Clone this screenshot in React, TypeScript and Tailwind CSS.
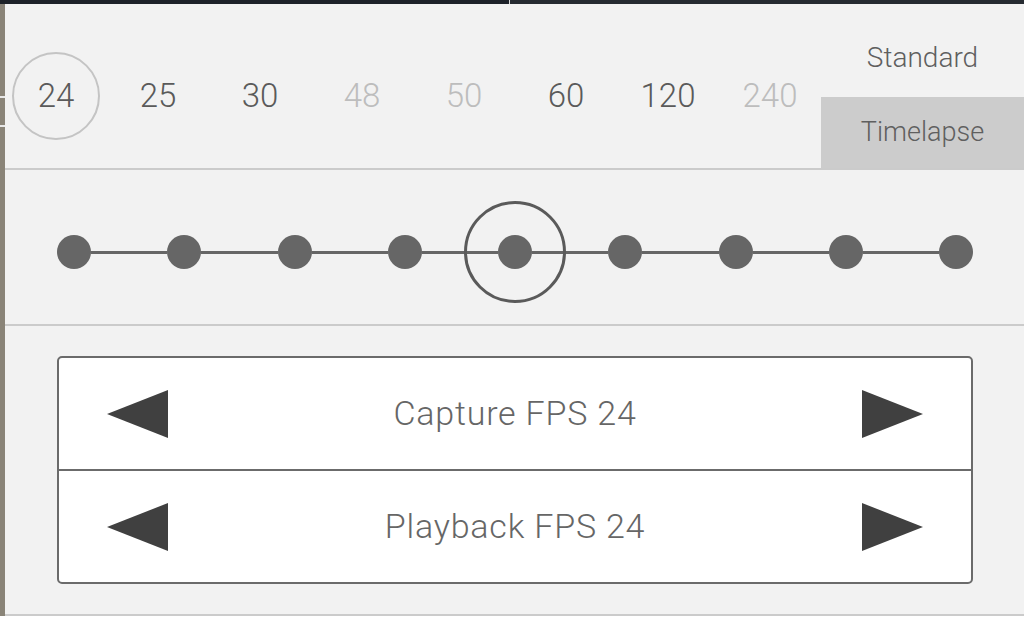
import React from "react";

const nums: { v: string; dim: boolean }[] = [
  { v: "24", dim: false },
  { v: "25", dim: false },
  { v: "30", dim: false },
  { v: "48", dim: true },
  { v: "50", dim: true },
  { v: "60", dim: false },
  { v: "120", dim: false },
  { v: "240", dim: true },
];

function LeftTri() {
  return (
    <svg width="61" height="48" viewBox="0 0 61 48" className="shrink-0">
      <polygon points="0,24 61,0 61,48" fill="#404040" />
    </svg>
  );
}
function RightTri() {
  return (
    <svg width="61" height="48" viewBox="0 0 61 48" className="shrink-0">
      <polygon points="61,24 0,0 0,48" fill="#404040" />
    </svg>
  );
}

export default function App() {
  const font = { fontFamily: "Roboto, 'Liberation Sans', sans-serif" };
  return (
    <div className="w-[1024px] h-[632px] overflow-hidden flex flex-col bg-white" style={font}>
      <div className="h-[4px] flex shrink-0">
        <div className="w-[509px] bg-[#1d2229]" />
        <div className="w-[1px] bg-[#d8d8d8]" />
        <div className="flex-1 bg-[#262b31]" />
      </div>
      <div className="flex h-[612px] shrink-0">
        <div className="w-[5px] flex flex-col bg-[#8a8478]">
          <div className="h-[92px]" />
          <div className="h-[2px] bg-[#e8e8e8]" />
          <div className="h-[27px]" />
          <div className="h-[2px] bg-[#e8e8e8]" />
        </div>
        <div className="flex-1 bg-[#f2f2f2] flex flex-col">
          {/* top section */}
          <div className="h-[166px] flex border-b-2 border-[#cbcbcb]">
            <div className="flex items-center pt-[20px]">
              {nums.map((n, i) => (
                <div key={n.v} className="w-[102px] flex items-center justify-center">
                  {i === 0 ? (
                    <div className="w-[88px] h-[88px] rounded-full border-2 border-[#c4c4c4] flex items-center justify-center text-[33px] font-light text-[#5a5a5a]">
                      {n.v}
                    </div>
                  ) : (
                    <span className={`text-[33px] font-light ${n.dim ? "text-[#bdbdbd]" : "text-[#5a5a5a]"}`}>{n.v}</span>
                  )}
                </div>
              ))}
            </div>
            <div className="flex-1 flex flex-col">
              <div className="h-[93px] flex items-center justify-center pt-[14px] text-[28px] font-light text-[#5f5f5f]">
                Standard
              </div>
              <div className="flex-1 bg-[#cccccc] flex items-center justify-center text-[27px] font-light text-[#5f5f5f]">
                Timelapse
              </div>
            </div>
          </div>
          {/* slider */}
          <div className="h-[156px] flex items-center pt-[10px] pl-[52px] pr-[51px] border-b-2 border-[#cbcbcb]">
            <div className="flex-1 flex items-center">
              {Array.from({ length: 9 }).map((_, i) => (
                <React.Fragment key={i}>
                  {i > 0 && <div className="flex-1 h-[3px] bg-[#666666]" />}
                  <div className="relative w-[34px] h-[34px] rounded-full bg-[#666666] shrink-0">
                    {i === 4 && (
                      <div className="absolute left-[-34px] top-[-34px] w-[102px] h-[102px] rounded-full border-[3px] border-[#5a5a5a]" />
                    )}
                  </div>
                </React.Fragment>
              ))}
            </div>
          </div>
          {/* box */}
          <div className="h-[290px] pt-[30px] pb-[30px] pl-[52px] pr-[51px] border-b-2 border-[#cbcbcb]">
            <div className="h-full bg-white border-2 border-[#6b6b6b] rounded-[5px] flex flex-col">
              <div className="flex-1 flex items-center px-[48px] border-b-2 border-[#6b6b6b]">
                <LeftTri />
                <div className="flex-1 text-center text-[34px] tracking-[0.8px] font-light text-[#666666]">Capture FPS 24</div>
                <RightTri />
              </div>
              <div className="flex-1 flex items-center px-[48px]">
                <LeftTri />
                <div className="flex-1 text-center text-[34px] tracking-[0.8px] font-light text-[#666666]">Playback FPS 24</div>
                <RightTri />
              </div>
            </div>
          </div>
        </div>
      </div>
      <div className="flex-1 bg-white" />
    </div>
  );
}
